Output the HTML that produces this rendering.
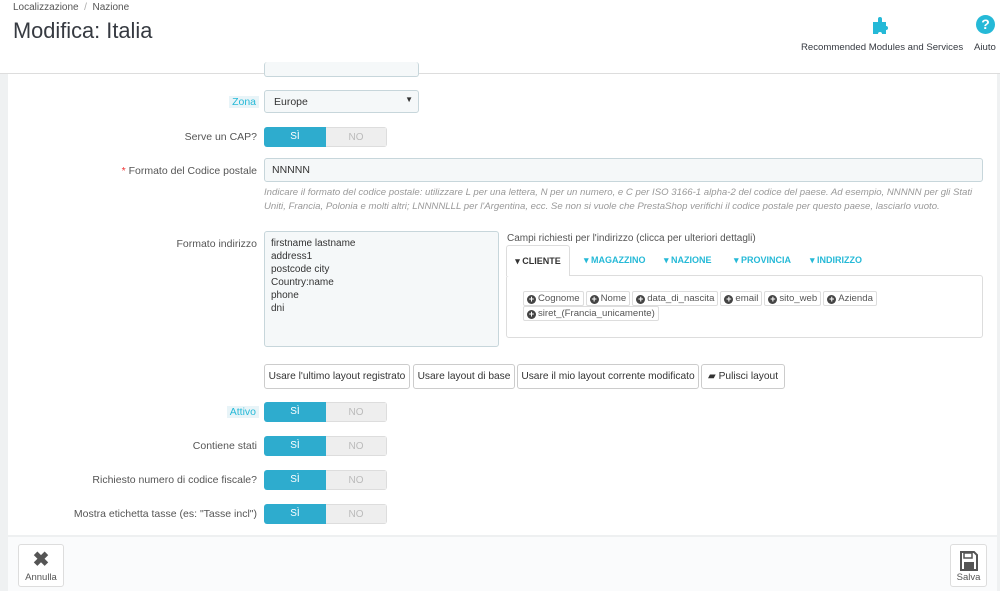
<!DOCTYPE html>
<html><head><meta charset="utf-8"><style>
*{box-sizing:border-box;margin:0;padding:0}
body{width:1000px;height:591px;overflow:hidden;background:#fff;font-family:"Liberation Sans",sans-serif;font-size:11px;color:#555;position:relative}
.a{position:absolute}
.lbl{position:absolute;right:743px;text-align:right;white-space:nowrap;font-size:10.5px;color:#555}
.sw{position:absolute;left:264px;width:123px;height:20px;border-radius:3px;overflow:hidden;display:flex;font-size:10px}
.sw .y{width:62px;background:#2eacce;color:#fff;text-align:center;line-height:20px}
.sw .n{flex:1;background:#eee;color:#bbb;text-align:center;line-height:20px;border:1px solid #ddd;border-left:0}
.inp{position:absolute;background:#f5f8f9;border:1px solid #c7d6db;border-radius:3px}
.tag{display:inline-block;border:1px solid #ddd;border-radius:2px;padding:1px 3px;font-size:9.6px;color:#555;margin-right:2px;line-height:11px}
.tag i{display:inline-block;width:9px;height:9px;border-radius:50%;background:#444;color:#fff;font-style:normal;font-size:9px;line-height:9px;text-align:center;vertical-align:-1px;margin-right:2px;font-weight:bold}
.btn{position:absolute;top:364px;height:25px;border:1px solid #ccc;border-radius:3px;background:#fff;font-size:10.2px;color:#333;line-height:23px;text-align:center}
.tab{position:absolute;top:245px;height:30px;line-height:30px;font-size:9px;font-weight:bold;color:#25b9d7}
</style></head><body>
<div class="a" style="left:13px;top:2px;font-size:10px;color:#555">Localizzazione &nbsp;<span style="color:#aaa">/</span>&nbsp; Nazione</div>
<div class="a" style="left:13px;top:18px;font-size:21.8px;color:#363a41">Modifica: Italia</div>
<svg class="a" style="left:871px;top:14px" width="22" height="22" viewBox="0 0 22 22"><path d="M2 8h5V5a2 2 0 1 1 4 0v3h4v4a2 2 0 1 1 0 4v4h-4a2 2 0 1 0-4 0H2z" fill="#25b9d7"/></svg>
<div class="a" style="left:801px;top:42px;font-size:9.6px;color:#363a41">Recommended Modules and Services</div>
<div class="a" style="left:976px;top:15px;width:19px;height:19px;border-radius:50%;background:#25b9d7;color:#fff;font-weight:bold;font-size:14px;text-align:center;line-height:19px">?</div>
<div class="a" style="left:974px;top:42px;font-size:9.6px;color:#363a41">Aiuto</div>
<div class="a" style="left:0;top:73px;width:1000px;height:1px;background:#ddd"></div>
<div class="a" style="left:0;top:74px;width:8px;height:517px;background:#eff1f2"></div>
<div class="a" style="left:997px;top:74px;width:3px;height:517px;background:#eff1f2"></div>
<div class="inp" style="left:264px;top:62px;width:155px;height:15px;border-top:0"></div>

<div class="lbl" style="top:96px;color:#25b9d7;background:#e8f4f8;padding:0 3px;right:741px">Zona</div>
<div class="inp" style="left:264px;top:90px;width:155px;height:23px;padding:5px 9px;font-size:10.5px;color:#333">Europe<span style="position:absolute;right:5px;top:4px;font-size:8px">▼</span></div>

<div class="lbl" style="top:131px">Serve un CAP?</div>
<div class="sw" style="top:127px"><div class="y">SÌ</div><div class="n">NO</div></div>

<div class="lbl" style="top:165px"><span style="color:#e33">*</span> Formato del Codice postale</div>
<div class="inp" style="left:264px;top:158px;width:719px;height:24px;padding:5px 7px;font-size:10.5px;color:#333">NNNNN</div>
<div class="a" style="left:264px;top:186px;width:720px;font-size:9.6px;font-style:italic;color:#999;line-height:13.5px">Indicare il formato del codice postale: utilizzare L per una lettera, N per un numero, e C per ISO 3166-1 alpha-2 del codice del paese. Ad esempio, NNNNN per gli Stati Uniti, Francia, Polonia e molti altri; LNNNNLLL per l'Argentina, ecc. Se non si vuole che PrestaShop verifichi il codice postale per questo paese, lasciarlo vuoto.</div>

<div class="lbl" style="top:238px">Formato indirizzo</div>
<div class="inp" style="left:264px;top:231px;width:235px;height:116px;padding:5px 6px;font-size:10px;color:#333;line-height:13px">firstname lastname<br>address1<br>postcode city<br>Country:name<br>phone<br>dni</div>

<div class="a" style="left:507px;top:233px;font-size:10px;color:#555">Campi richiesti per l'indirizzo (clicca per ulteriori dettagli)</div>
<div class="a" style="left:506px;top:275px;width:477px;height:63px;border:1px solid #ddd;border-radius:3px"></div>
<div class="a" style="left:506px;top:245px;width:64px;height:31px;border:1px solid #ddd;border-bottom:0;background:#fff;border-radius:3px 3px 0 0;font-size:9px;font-weight:bold;color:#333;line-height:30px;text-align:center">▾ CLIENTE</div>
<div class="tab" style="left:584px">▾ MAGAZZINO</div>
<div class="tab" style="left:664px">▾ NAZIONE</div>
<div class="tab" style="left:734px">▾ PROVINCIA</div>
<div class="tab" style="left:810px">▾ INDIRIZZO</div>
<div class="a" style="left:523px;top:291px;width:450px;line-height:15px"><span class="tag"><i>+</i>Cognome</span><span class="tag"><i>+</i>Nome</span><span class="tag"><i>+</i>data_di_nascita</span><span class="tag"><i>+</i>email</span><span class="tag"><i>+</i>sito_web</span><span class="tag"><i>+</i>Azienda</span><br><span class="tag"><i>+</i>siret_(Francia_unicamente)</span></div>

<div class="btn" style="left:264px;width:146px">Usare l'ultimo layout registrato</div>
<div class="btn" style="left:413px;width:102px">Usare layout di base</div>
<div class="btn" style="left:517px;width:182px">Usare il mio layout corrente modificato</div>
<div class="btn" style="left:701px;width:84px">▰ Pulisci layout</div>

<div class="lbl" style="top:406px;color:#25b9d7;background:#e8f4f8;padding:0 3px;right:741px">Attivo</div>
<div class="sw" style="top:402px"><div class="y">SÌ</div><div class="n">NO</div></div>
<div class="lbl" style="top:440px">Contiene stati</div>
<div class="sw" style="top:436px"><div class="y">SÌ</div><div class="n">NO</div></div>
<div class="lbl" style="top:474px">Richiesto numero di codice fiscale?</div>
<div class="sw" style="top:470px"><div class="y">SÌ</div><div class="n">NO</div></div>
<div class="lbl" style="top:508px">Mostra etichetta tasse (es: "Tasse incl")</div>
<div class="sw" style="top:504px"><div class="y">SÌ</div><div class="n">NO</div></div>

<div class="a" style="left:8px;top:535px;width:989px;height:56px;background:#fafbfc;border-top:2px solid #eef0f1"></div>
<div class="a" style="left:18px;top:544px;width:46px;height:43px;border:1px solid #ddd;border-radius:3px;background:#fff;text-align:center;font-size:9.5px;color:#555"><div style="font-size:20px;font-weight:bold;color:#555;line-height:24px;margin-top:3px">✖</div>Annulla</div>
<div class="a" style="left:950px;top:544px;width:37px;height:43px;border:1px solid #ddd;border-radius:3px;background:#fff;text-align:center;font-size:9.5px;color:#555">
<svg width="20" height="22" viewBox="0 0 20 22" style="margin-top:5px;display:block;margin-left:8px"><path d="M2 2h13l3 3v15H2z" fill="none" stroke="#555" stroke-width="2"/><rect x="5" y="3" width="8" height="5" fill="none" stroke="#555" stroke-width="1.5"/><rect x="5" y="12" width="10" height="7" fill="#555"/></svg>Salva</div>
</body></html>
